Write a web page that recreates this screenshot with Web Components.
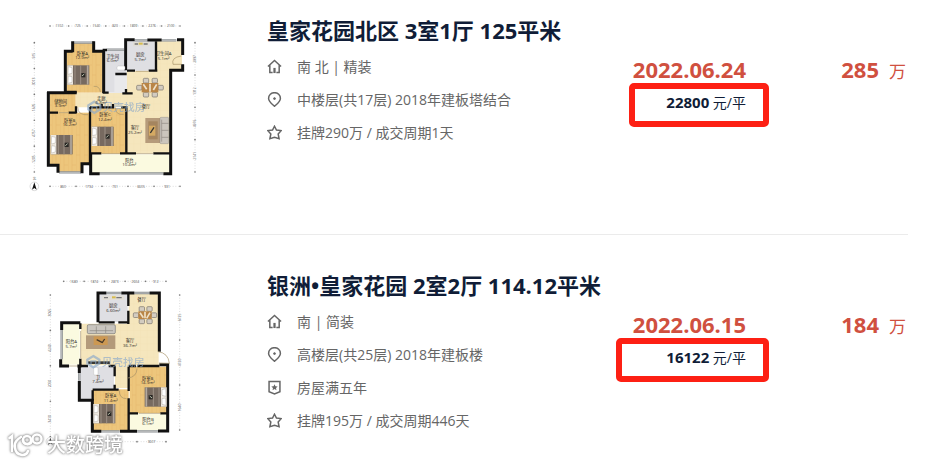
<!DOCTYPE html>
<html lang="zh-CN">
<head>
<meta charset="utf-8">
<title>成交房源</title>
<style>
  body {
    margin: 0;
    background: #fff;
    font-family: "Open Sans", "Noto Sans CJK SC", sans-serif;
  }
</style>
</head>
<body>
<deal-list>
  <deal-item>
    <floor-plan slot="plan" type="three"></floor-plan>
    <a slot="title" href="#a">皇家花园北区 3室1厅 125平米</a>
    <detail-row icon="home">南 北 | 精装</detail-row>
    <detail-row icon="pin">中楼层(共17层) 2018年建板塔结合</detail-row>
    <detail-row icon="star">挂牌290万 / 成交周期1天</detail-row>
    <deal-price slot="deal" date="2022.06.24" unit="22800"></deal-price>
    <total-price slot="total">285</total-price>
  </deal-item>
  <deal-item>
    <floor-plan slot="plan" type="two"></floor-plan>
    <a slot="title" href="#b">银洲•皇家花园 2室2厅 114.12平米</a>
    <detail-row icon="home">南 | 简装</detail-row>
    <detail-row icon="pin">高楼层(共25层) 2018年建板楼</detail-row>
    <detail-row icon="badge">房屋满五年</detail-row>
    <detail-row icon="star">挂牌195万 / 成交周期446天</detail-row>
    <deal-price slot="deal" date="2022.06.15" unit="16122" wide></deal-price>
    <total-price slot="total">184</total-price>
  </deal-item>
  <brand-mark slot="mark"></brand-mark>
</deal-list>

<script>
class DealList extends HTMLElement {
  constructor() {
    super();
    this.attachShadow({ mode: 'open' }).innerHTML = `
      <style>
        :host { display: block; position: relative; padding-right: 42px; }
        ::slotted(deal-item:first-of-type) {
          box-sizing: border-box;
          min-height: 235px;
          padding-top: 10px;
          border-bottom: 1px solid #ebebeb;
        }
      </style>
      <slot></slot>
      <slot name="mark"></slot>
    `;
  }
}

class DealItem extends HTMLElement {
  constructor() {
    super();
    this.attachShadow({ mode: 'open' }).innerHTML = `
      <style>
        :host {
          display: grid;
          grid-template-columns: 180px 1fr 154px 139px;
          align-items: start;
          padding: 30px 0 0 20px;
        }
        .info { padding: 5px 0 0 67px; }
        h2 {
          margin: 0 0 5px;
          font-size: 22px;
          line-height: 30px;
          font-weight: 700;
          white-space: nowrap;
        }
        ::slotted(a) { color: #101d37; text-decoration: none; }
        .deal, .total { padding-top: 45px; }
        .total { padding-right: 2px; }
      </style>
      <div class="plan"><slot name="plan"></slot></div>
      <div class="info">
        <h2><slot name="title"></slot></h2>
        <slot></slot>
      </div>
      <div class="deal"><slot name="deal"></slot></div>
      <div class="total"><slot name="total"></slot></div>
    `;
  }
}

const ICONS = {
  home: '<path d="M1 8 8 1.5 15 8M3 6.500V14.300h3M13 6.500V14.300h-3"/><path d="M8 9.500v5.500" stroke-width="2.400"/>',
  pin: '<path d="M8 15.300C5 12.500 1.700 10 1.700 6.800a6.300 6.100 0 0 1 12.600 0C14.300 10 11 12.500 8 15.300Z"/><circle cx="8" cy="7" r="1" fill="#666" stroke-width="1"/>',
  badge: '<path d="M2.200 1.500h11.600v11L8 14.800l-5.800-2.300Z"/><path d="m8 4.500 1 2.200 2.400.2-1.800 1.600.5 2.400L8 9.700l-2.100 1.200.5-2.400-1.800-1.600 2.400-.2Z" fill="#666" stroke="none"/>',
  star: '<path d="m8 1.300 2.100 4.100 5 .6-3.200 3.600 1 5.100L8 13.200l-4.900 1.500 1-5.100L.9 6l5-.6Z"/>'
};

class DetailRow extends HTMLElement {
  connectedCallback() {
    this.attachShadow({ mode: 'open' }).innerHTML = `
      <style>
        :host {
          display: flex;
          align-items: center;
          gap: 15px;
          height: 33px;
          font-size: 14px;
          line-height: 20px;
          color: #666;
          white-space: nowrap;
        }
        svg { width: 15px; height: 15px; flex: none; }
      </style>
      <svg viewBox="0 0 16 16" fill="none" stroke="#666" stroke-width="1.600" aria-hidden="true">${ICONS[this.getAttribute('icon')]}</svg>
      <span><slot></slot></span>
    `;
  }
}

class DealPrice extends HTMLElement {
  connectedCallback() {
    this.attachShadow({ mode: 'open' }).innerHTML = `
      <style>
        :host { display: flex; flex-direction: column; align-items: flex-end; }
        time {
          padding-right: 23px;
          font-size: 22px;
          line-height: 28px;
          font-weight: 700;
          color: #d0503f;
        }
        .unit {
          box-sizing: border-box;
          width: 140px;
          height: 44px;
          padding: 1px 17px 0 0;
          border: 6px solid #fd2014;
          border-radius: 5px;
          text-align: right;
          font-size: 14px;
          line-height: 24px;
          color: #101d37;
        }
        :host([wide]) .unit { width: 153px; }
        b { font-size: 15px; }
      </style>
      <time>${this.getAttribute('date')}</time>
      <div class="unit"><b>${this.getAttribute('unit')}</b> 元/平</div>
    `;
  }
}

class TotalPrice extends HTMLElement {
  constructor() {
    super();
    this.attachShadow({ mode: 'open' }).innerHTML = `
      <style>
        :host { display: flex; justify-content: flex-end; align-items: baseline; gap: 10px; color: #d0503f; line-height: 28px; }
        b { font-size: 22px; }
        span { font-size: 17px; }
      </style>
      <b><slot></slot></b><span>万</span>
    `;
  }
}

// ---- floor plan drawing helpers, three units per css pixel ----
const rect = (x, y, w, h, fill) => `<rect x="${x}" y="${y}" width="${w}" height="${h}" fill="${fill}"/>`;
const wall = (d, w = 7) => `<path d="${d}" fill="none" stroke="#111" stroke-width="${w}"/>`;
const glass = d => `<path d="${d}" fill="none" stroke="#858a8d" stroke-width="7"/><path d="${d}" fill="none" stroke="#ddd" stroke-width="2"/>`;
const door = d => `<path d="${d}" fill="none" stroke="#a69368" stroke-width="2"/>`;
const label = (x, y, name, size) => `<text x="${x}" y="${y}">${name}</text><text x="${x}" y="${y + 14}">${size}</text>`;

const bed = (x, y, flip) => `
  <g transform="translate(${x} ${y})${flip ? ' translate(66 0) scale(-1 1)' : ''}">
    <rect width="66" height="58" fill="#776a60"/>
    <rect width="17" height="58" fill="#eee9e1"/>
    <path d="M3 4 14 7v17L2 27ZM3 32l11 2v17L2 54Z" fill="#fff" stroke="#938b83"/>
    <path d="M23 0v58M40 0v58" stroke="#9c9085" stroke-width="3"/>
    <path d="M61 0v58" stroke="#b3a99e" stroke-width="5"/>
    <rect x="42" y="23" width="12" height="13" fill="#292724"/>
    <path d="m44 32 7-6" stroke="#bac1ad" stroke-width="3"/>
  </g>`;

const dining = (x, y, w, h) => {
  const chair = (cx, cy) => `<rect x="${cx}" y="${cy}" width="16" height="14" rx="3" fill="#d3ccc0" stroke="#77716a" stroke-width="2"/>`;
  return `<g transform="translate(${x} ${y})">
    ${chair(w * .25, 0)}${chair(w * .58, 0)}${chair(w * .25, h - 14)}${chair(w * .58, h - 14)}
    ${chair(0, h / 2 - 7)}${chair(w - 16, h / 2 - 7)}
    <rect x="15" y="14" width="${w - 30}" height="${h - 28}" fill="#b98546"/>
    <path d="m20 18 10 15M${w - 20} 18l-10 17M${w / 2} 16v${h - 32}" stroke="#eee1c9" stroke-width="5"/>
  </g>`;
};

// dimension line with tick dots, horizontal or vertical
const ruler = (start, end, at, values, vertical) => {
  const step = (end - start) / values.length;
  const line = vertical ? `M${at} ${start}V${end}` : `M${start} ${at}H${end}`;
  const marks = values.map((v, i) => {
    const p = start + step * (i + .5);
    if (!v) return '';
    return vertical
      ? `<text transform="translate(${at + 3} ${p}) rotate(-90)" font-size="10">${v}</text>`
      : `<text x="${p}" y="${at + 4}" font-size="10">${v}</text>`;
  }).join('');
  const dots = values.concat('').map((v, i) => {
    const p = start + step * i;
    return vertical ? `<circle cx="${at}" cy="${p}" r="2.500"/>` : `<circle cx="${p}" cy="${at}" r="2.500"/>`;
  }).join('');
  return `<path d="${line}" stroke="#bbb" stroke-width="1.500" stroke-dasharray="3 5"/><g fill="#777">${dots}</g>${marks}`;
};

const compass = (x, y) => `<circle cx="${x}" cy="${y}" r="13" fill="#fff" stroke="#bbb" stroke-width="1.500"/><path d="m${x} ${y - 12} 7 22-7-5-7 5Z" fill="#111"/>`;

const logo = (x, y) => `
  <g opacity=".65">
    <path d="m${x} ${y - 17} 18 11v12l-18 11-18-11v-12Z" fill="none" stroke="#8ba9cb" stroke-width="7"/>
    <path d="M${x - 7} ${y + 9}v-11h14v11" fill="none" stroke="#8ba9cb" stroke-width="4"/>
    <text x="${x + 89}" y="${y + 12}" font-size="32" font-weight="500">贝壳找房</text>
  </g>`;

const WOOD = 'url(#wood)';
const TILE = 'url(#tile)';
const GREY = '#dfdfe3';
const CREAM = '#fbfae0';

const threeRooms = `
  ${rect(140, 124, 108, 124, WOOD)}${rect(160, 97, 61, 30, WOOD)}
  ${rect(89, 248, 78, 60, WOOD)}${rect(89, 308, 122, 154, WOOD)}${rect(115, 460, 72, 27, WOOD)}
  ${rect(213, 294, 108, 137, WOOD)}
  <path d="M168 249h152v-67h89V94h77v90h-37v246H320V292H168Z" fill="${TILE}"/>
  ${rect(251, 119, 68, 129, GREY)}${rect(323, 94, 84, 88, GREY)}
  ${rect(215, 433, 233, 56, CREAM)}
  <path d="M283 192h37v56h-37Z" fill="#e9e9eb"/>
  ${glass('M160 98h62M260 119h52M344 91h38M425 91h44M117 487h66M238 490h191')}
  ${wall('M158 124h-22v121M158 94v33M221 94v30h30v125M81 248h89M85 246v220h29v22M186 490v-29h26', 9)}
  ${wall('M212 430v32v29h27M430 491h22V181h36v-18M488 135V89h-17M317 120V89h27M382 90h43M317 120v61', 9)}
  ${wall('M137 246h33M248 120h13M248 248h18M286 192h34M318 237v16M307 250h31M321 182h24M386 182h26M408 94v88M168 289v20M88 308h26M146 308h24M210 292h34M245 282v10h34v-10M304 292h15v139M210 430h34M300 430h48M400 430h50M210 291v175')}
  ${door('M221 229q18-2 20 17M173 291q0 26 32 23M286 292q0 24 25 21M484 138q-31 4-25 25h25M347 184h38M115 308h32M244 431h56M348 431h52')}
  ${bed(142, 166)}${bed(92, 375)}${bed(215, 350)}
  ${rect(339, 96, 49, 13, '#e0ddd5')}<path d="M344 102h10m17 0h12" stroke="#777" stroke-width="4"/>${rect(356, 98, 12, 6, '#d6bc50')}
  <rect x="291" y="168" width="24" height="12" rx="4" fill="#fff" stroke="#aaa"/>
  ${dining(350, 205, 80, 56)}
  ${rect(376, 324, 44, 75, '#b69b7b')}${rect(385, 334, 28, 54, '#a5855f')}${rect(387, 347, 19, 30, '#d5aa63')}
  <path d="m391 369 11-17" stroke="#343432" stroke-width="4"/>
  <rect x="420" y="322" width="26" height="79" rx="3" fill="#cbc5bd" stroke="#777"/>
  <path d="M425 340h21M425 361h21M425 382h21M425 329v66" stroke="#8e8882" stroke-width="2"/>
  ${logo(223, 292)}
  <g>${label(187, 134, '卧室A', '12.9m²')}${label(278, 143, '卫生间', '6.0m²')}${label(361, 138, '厨房', '5.7m²')}
  ${label(431, 135, '卫生间A', '5.1m²')}${label(122, 278, '储物间', '3.9m²')}${label(244, 269, '走廊', '6.8m²')}
  ${label(149, 335, '卧室B', '16.2m²')}${label(255, 318, '卧室C', '12.4m²')}${label(345, 357, '客厅', '25.2m²')}${label(328, 455, '阳台', '10.4m²')}
  <text x="378" y="293">餐厅</text></g>
  ${ruler(90, 480, 48, ['1102', '725', '1540', '820', '1899', '2276', '2100'])}
  ${ruler(90, 480, 529, ['860', '1794', '731', '6605', '931'])}
  ${ruler(98, 486, 43, ['915', '3013', '1635', '4757', '1205'], true)}
  ${ruler(98, 486, 525, ['2897', '1312', '4976', '2141'], true)}
  ${compass(43, 529)}<text x="43" y="509" font-size="10">北</text>
`;

// the lower ruler and compass lie under the brand mark, so most of their labels are left out
const twoRooms = `
  <path d="M183 161h143V71h90v215h-90v68h-41v-68H183Z" fill="${TILE}"/>
  ${rect(238, 74, 85, 82, GREY)}${rect(125, 162, 54, 122, CREAM)}
  <path d="M181 289h101v68h-64v30h-37Z" fill="${GREY}"/>
  ${rect(217, 358, 109, 124, WOOD)}${rect(329, 290, 112, 139, WOOD)}${rect(330, 431, 110, 50, CREAM)}
  ${glass('M259 69h45M343 69h47M125 180v88M178 309v23M244 484h55M351 484h64')}
  ${wall('M259 69h-25v88M304 69h39M389 69h29v176M418 284h25v199h-29M125 180v-22h56M122 268v20h25M172 288h12M178 289v20M178 333v58h39v93h27M300 484h51', 9)}
  ${wall('M325 70v38M325 122v40M236 157h48M295 157h33M181 160v17M181 266v22h23M284 289v30M284 344v15H218M218 361v31M266 288h20M326 288h22M352 288h66M326 290v73M284 359h12M326 385v99M329 430h25M421 430h22')}
  ${door('M324 324q26-3 27-28M298 361q-1 25 22 25M414 245q31 4 34 35l-31-1M182 183v82M356 430h65M147 288h25')}
  ${bed(220, 402)}${bed(374, 352, true)}
  ${rect(247, 77, 66, 13, '#e2ded6')}<path d="M252 83h12m25 0h16" stroke="#777" stroke-width="4"/>${rect(276, 79, 11, 6, '#d6bc50')}
  <rect x="221" y="292" width="13" height="23" rx="3" fill="#fff" stroke="#aaa"/>
  ${dining(340, 110, 70, 51)}
  ${rect(198, 196, 88, 41, '#b39a7b')}<rect x="221" y="199" width="42" height="26" fill="#cc9852"/>
  <path d="m230 209 16 8m8-10-8 12" stroke="#45382a" stroke-width="4"/>
  <rect x="202" y="164" width="84" height="27" rx="4" fill="#c9c5bf" stroke="#777" stroke-width="2"/>
  <path d="M209 182h70M229 169v20M257 169v20" stroke="#8b8781" stroke-width="2"/>
  ${rect(204, 274, 66, 8, '#3a3937')}
  ${logo(220, 275)}
  <g>${label(280, 112, '厨房', '6.60m²')}<text x="365" y="94">餐厅</text>${label(154, 220, '阳台A', '5.7m²')}
  ${label(330, 217, '客厅', '36.7m²')}${label(234, 326, '卫', '7.4m²')}${label(383, 329, '卧室B', '14.9m²')}
  ${label(272, 382, '卧室A', '11.4m²')}${label(384, 452, '阳台B', '6.1m²')}</g>
  ${ruler(131, 438, 34, ['1680', '1874', '2873', '2604', '912'])}
  ${ruler(90, 438, 515, ['', '', '', '3607'])}
  ${ruler(75, 500, 91, ['3065', '4240', '2050', '3410'], true)}
  ${ruler(75, 480, 479, ['6725', '4720', '1640'], true)}
  ${compass(91, 515)}
`;

class FloorPlan extends HTMLElement {
  connectedCallback() {
    const three = this.getAttribute('type') === 'three';
    this.attachShadow({ mode: 'open' }).innerHTML = `
      <style>
        :host { display: block; }
        :host([type="two"]) { padding-top: 5px; }
        svg { display: block; width: 100%; }
        text { text-anchor: middle; font-size: 13px; fill: #302c27; }
        text[font-size="10"] { font-size: 10px; fill: #555; }
        text[font-size="32"] { font-size: 32px; fill: #8ba9cb; }
      </style>
      <svg viewBox="0 0 540 570" role="img" aria-label="户型图">
        <defs>
          <pattern id="wood" width="24" height="60" patternUnits="userSpaceOnUse">
            <rect width="24" height="60" fill="#edc67c"/>
            <path d="M0 0v60M12 0v60M0 15h12M12 45h12" stroke="#e5b96b" stroke-width="1.500"/>
          </pattern>
          <pattern id="tile" width="20" height="20" patternUnits="userSpaceOnUse">
            <rect width="20" height="20" fill="#f5e6bd"/>
            <path d="M0 0h20M0 0v20" stroke="#eddcae"/>
          </pattern>
        </defs>
        ${three ? threeRooms : twoRooms}
      </svg>
    `;
  }
}

class BrandMark extends HTMLElement {
  constructor() {
    super();
    this.attachShadow({ mode: 'open' }).innerHTML = `
      <style>
        /* sits over the lower left corner of the list */
        :host {
          position: absolute;
          left: 8px;
          bottom: 0;
          display: flex;
          align-items: center;
          gap: 4px;
          color: #fff;
          font-size: 19px;
          line-height: 30px;
          font-weight: 500;
          filter: drop-shadow(0 0 1px #888) drop-shadow(0 0 1px #bbb);
        }
        svg { width: 35px; height: 28px; }
      </style>
      <svg viewBox="0 0 35 28" fill="none" stroke="#fff" stroke-width="2.500" stroke-linecap="round" aria-hidden="true">
        <path d="M1.500 7 4 5v15M13 6C8 9 6 13 7 17c1 8 11 9 13 3"/>
        <circle cx="19" cy="9" r="4"/><circle cx="29" cy="8" r="4.500"/>
        <path d="M15 9c0 5 8 6 9 0"/>
      </svg>
      <span>大数跨境</span>
    `;
  }
}

customElements.define('deal-list', DealList);
customElements.define('deal-item', DealItem);
customElements.define('detail-row', DetailRow);
customElements.define('deal-price', DealPrice);
customElements.define('total-price', TotalPrice);
customElements.define('floor-plan', FloorPlan);
customElements.define('brand-mark', BrandMark);
</script>
</body>
</html>
